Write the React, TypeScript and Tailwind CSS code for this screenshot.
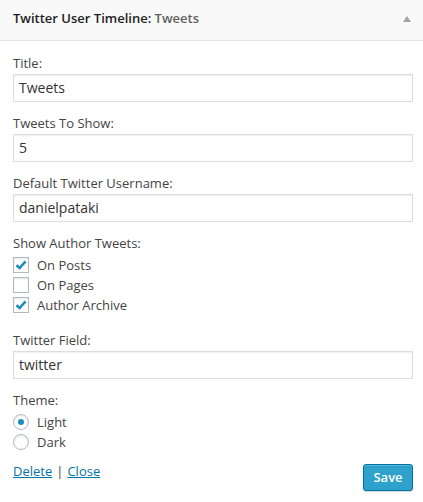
import React from "react";

const font = { fontFamily: '"Open Sans", sans-serif' };

function Field({ label, value }: { label: string; value: string }) {
  return (
    <div className="mb-[12px]">
      <div className="text-[13px] leading-[18px] text-[#444]">{label}</div>
      <div className="mt-[2px] h-[28px] w-full border border-[#ddd] bg-white px-[5px] text-[14px] leading-[26px] text-[#333] shadow-[inset_0_1px_2px_rgba(0,0,0,0.07)]">
        {value}
      </div>
    </div>
  );
}

function Check({ checked, label }: { checked: boolean; label: string }) {
  return (
    <div className="flex h-[20px] items-center">
      <div className="flex h-[16px] w-[16px] items-center justify-center border border-[#b4b9be] bg-white shadow-[inset_0_1px_2px_rgba(0,0,0,0.1)]">
        {checked && (
          <svg width="14" height="14" viewBox="0 0 14 14">
            <path d="M2.5 7.2 L5.6 10 L11.6 3.4" fill="none" stroke="#1e8cbe" strokeWidth="2.6" strokeLinecap="butt" strokeLinejoin="miter" />
          </svg>
        )}
      </div>
      <span className="ml-[8px] text-[13px] leading-[18px] text-[#444]">{label}</span>
    </div>
  );
}

function Radio({ checked, label }: { checked: boolean; label: string }) {
  return (
    <div className="flex h-[20px] items-center">
      <div className="flex h-[16px] w-[16px] items-center justify-center rounded-full border border-[#b4b9be] bg-white shadow-[inset_0_1px_2px_rgba(0,0,0,0.1)]">
        {checked && <div className="h-[6px] w-[6px] rounded-full bg-[#1e8cbe]" />}
      </div>
      <span className="ml-[8px] text-[13px] leading-[18px] text-[#444]">{label}</span>
    </div>
  );
}

export default function App() {
  return (
    <div style={font} className="h-[502px] w-[423px] bg-white">
      <div className="flex h-[41px] items-start justify-between border-b border-[#e5e5e5] bg-[#f9f9f9] pl-[13px] pr-[12px] pt-[9px]">
        <div className="text-[13px] font-semibold leading-[18px] text-[#222]">
          Twitter User Timeline: <span className="text-[#5f5f5f]">Tweets</span>
        </div>
        <svg width="8" height="6" viewBox="0 0 8 6" className="mt-[7px]">
          <path d="M4 0 L8 6 L0 6 Z" fill="#a0a5aa" />
        </svg>
      </div>
      <div className="pl-[13px] pr-[10px] pt-[13px]">
        <Field label="Title:" value="Tweets" />
        <Field label="Tweets To Show:" value="5" />
        <Field label="Default Twitter Username:" value="danielpataki" />
        <div>
          <div className="text-[13px] leading-[18px] text-[#444]">Show Author Tweets:</div>
          <div className="mt-[3px] flex flex-col">
            <Check checked label="On Posts" />
            <Check checked={false} label="On Pages" />
            <Check checked label="Author Archive" />
          </div>
        </div>
        <div className="mt-[16px]">
          <Field label="Twitter Field:" value="twitter" />
        </div>
        <div>
          <div className="text-[13px] leading-[18px] text-[#444]">Theme:</div>
          <div className="mt-[3px] flex flex-col">
            <Radio checked label="Light" />
            <Radio checked={false} label="Dark" />
          </div>
        </div>
        <div className="mt-[10px] flex items-start justify-between">
          <div className="text-[13px] leading-[18px] text-[#444]">
            <a className="text-[#0074a2] underline">Delete</a>
            <span className="mx-[4px]">|</span>
            <a className="text-[#0074a2] underline">Close</a>
          </div>
          <button className="mt-[2px] h-[27px] w-[50px] rounded-[3px] border border-[#0074a2] bg-[#2ea2cc] text-[13px] font-semibold leading-[25px] text-white shadow-[inset_0_1px_0_rgba(120,200,230,0.5),0_1px_0_rgba(0,0,0,0.15)]">
            Save
          </button>
        </div>
      </div>
    </div>
  );
}
